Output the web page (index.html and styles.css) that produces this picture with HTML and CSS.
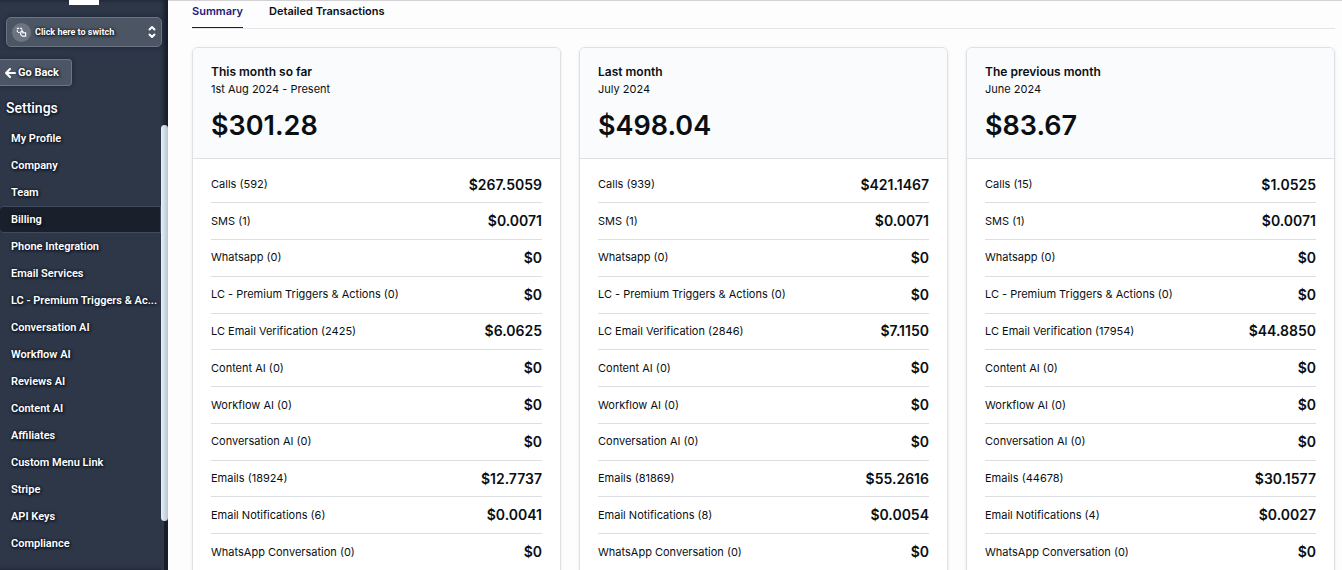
FILE: index.html
```html
<!DOCTYPE html>
<html lang="en">
<head>
<meta charset="utf-8">
<title>Billing</title>
<link rel="stylesheet" href="styles.css">
</head>
<body>
<aside class="sidebar">
  <div class="logo"></div>
  <button class="switcher" type="button">
    <span class="switcher-icon">
      <svg width="11" height="11" viewBox="0 0 12 12" fill="none" stroke="#fff" stroke-width="1.300"><rect x="1.500" y="1.500" width="5" height="4.500" stroke-dasharray="2 1"/><path d="M5.500 5h2v1.500h3v3.500h-3.500l-2-2z" fill="#5d6673"/></svg>
    </span>
    <span class="switcher-label">Click here to switch</span>
    <svg width="8" height="14" viewBox="0 0 8 14" fill="none" stroke="#fff" stroke-width="2" stroke-linecap="round" stroke-linejoin="round"><path d="M1.500 4.500L4 2l2.500 2.500M1.500 9.500L4 12l2.500-2.500"/></svg>
  </button>
  <button class="back" type="button">
    <svg width="11" height="10" viewBox="0 0 11 10" fill="none" stroke="#fff" stroke-width="2" stroke-linecap="round" stroke-linejoin="round"><path d="M5 1L1 5l4 4M1 5h9"/></svg>
    Go Back
  </button>
  <h2 class="settings-title">Settings</h2>
  <div class="menu-area">
    <nav class="menu">
      <a href="#">My Profile</a>
      <a href="#">Company</a>
      <a href="#">Team</a>
      <a href="#" class="active" aria-current="page">Billing</a>
      <a href="#">Phone Integration</a>
      <a href="#">Email Services</a>
      <a href="#">LC - Premium Triggers &amp; Ac...</a>
      <a href="#">Conversation AI</a>
      <a href="#">Workflow AI</a>
      <a href="#">Reviews AI</a>
      <a href="#">Content AI</a>
      <a href="#">Affiliates</a>
      <a href="#">Custom Menu Link</a>
      <a href="#">Stripe</a>
      <a href="#">API Keys</a>
      <a href="#">Compliance</a>
    </nav>
    <div class="track"><div class="thumb"></div></div>
  </div>
</aside>
<main class="content">
  <nav class="tabs">
    <a href="#" class="tab selected" aria-current="page">Summary</a>
    <a href="#" class="tab">Detailed Transactions</a>
  </nav>
  <div class="cards">
    <section class="card">
      <header class="card-head">
        <h3>This month so far</h3>
        <p class="period">1st Aug 2024 - Present</p>
        <p class="total">$301.28</p>
      </header>
      <div class="card-body">
        <table class="usage">
          <tr><th scope="row">Calls (592)</th><td>$267.5059</td></tr>
          <tr><th scope="row">SMS (1)</th><td>$0.0071</td></tr>
          <tr><th scope="row">Whatsapp (0)</th><td>$0</td></tr>
          <tr><th scope="row">LC - Premium Triggers &amp; Actions (0)</th><td>$0</td></tr>
          <tr><th scope="row">LC Email Verification (2425)</th><td>$6.0625</td></tr>
          <tr><th scope="row">Content AI (0)</th><td>$0</td></tr>
          <tr><th scope="row">Workflow AI (0)</th><td>$0</td></tr>
          <tr><th scope="row">Conversation AI (0)</th><td>$0</td></tr>
          <tr><th scope="row">Emails (18924)</th><td>$12.7737</td></tr>
          <tr><th scope="row">Email Notifications (6)</th><td>$0.0041</td></tr>
          <tr><th scope="row">WhatsApp Conversation (0)</th><td>$0</td></tr>
        </table>
      </div>
    </section>
    <section class="card">
      <header class="card-head">
        <h3>Last month</h3>
        <p class="period">July 2024</p>
        <p class="total">$498.04</p>
      </header>
      <div class="card-body">
        <table class="usage">
          <tr><th scope="row">Calls (939)</th><td>$421.1467</td></tr>
          <tr><th scope="row">SMS (1)</th><td>$0.0071</td></tr>
          <tr><th scope="row">Whatsapp (0)</th><td>$0</td></tr>
          <tr><th scope="row">LC - Premium Triggers &amp; Actions (0)</th><td>$0</td></tr>
          <tr><th scope="row">LC Email Verification (2846)</th><td>$7.1150</td></tr>
          <tr><th scope="row">Content AI (0)</th><td>$0</td></tr>
          <tr><th scope="row">Workflow AI (0)</th><td>$0</td></tr>
          <tr><th scope="row">Conversation AI (0)</th><td>$0</td></tr>
          <tr><th scope="row">Emails (81869)</th><td>$55.2616</td></tr>
          <tr><th scope="row">Email Notifications (8)</th><td>$0.0054</td></tr>
          <tr><th scope="row">WhatsApp Conversation (0)</th><td>$0</td></tr>
        </table>
      </div>
    </section>
    <section class="card">
      <header class="card-head">
        <h3>The previous month</h3>
        <p class="period">June 2024</p>
        <p class="total">$83.67</p>
      </header>
      <div class="card-body">
        <table class="usage">
          <tr><th scope="row">Calls (15)</th><td>$1.0525</td></tr>
          <tr><th scope="row">SMS (1)</th><td>$0.0071</td></tr>
          <tr><th scope="row">Whatsapp (0)</th><td>$0</td></tr>
          <tr><th scope="row">LC - Premium Triggers &amp; Actions (0)</th><td>$0</td></tr>
          <tr><th scope="row">LC Email Verification (17954)</th><td>$44.8850</td></tr>
          <tr><th scope="row">Content AI (0)</th><td>$0</td></tr>
          <tr><th scope="row">Workflow AI (0)</th><td>$0</td></tr>
          <tr><th scope="row">Conversation AI (0)</th><td>$0</td></tr>
          <tr><th scope="row">Emails (44678)</th><td>$30.1577</td></tr>
          <tr><th scope="row">Email Notifications (4)</th><td>$0.0027</td></tr>
          <tr><th scope="row">WhatsApp Conversation (0)</th><td>$0</td></tr>
        </table>
      </div>
    </section>
  </div>
</main>
</body>
</html>
```
FILE: styles.css
```css
* { box-sizing: border-box; }
body {
  margin: 0;
  display: flex;
  height: 100vh;
  overflow: hidden;
  font-family: Inter, "Liberation Sans", sans-serif;
  color: #0a0f14;
  background: #fdfdfd;
}
h2, h3, p { margin: 0; }
a { color: inherit; text-decoration: none; }

.sidebar {
  flex: 0 0 168px;
  display: flex;
  flex-direction: column;
  align-items: flex-start;
  overflow: hidden;
  background: #2d3748;
  box-shadow: inset -4px 0 4px #171d2b;
  color: #fff;
  font-family: Roboto, "Liberation Sans", sans-serif;
  text-shadow: 0 0 3px #0b101c, 1px 1px 3px #0b101c;
}
.logo {
  flex: none;
  width: 30px;
  height: 5px;
  margin: 0 auto 12px;
  background: #fff;
}
.switcher, .back {
  display: flex;
  align-items: center;
  border: 1px solid #6a7482;
  background: #4b5564;
  color: #fff;
  font-family: inherit;
  font-weight: 700;
  text-shadow: inherit;
  box-shadow: 0 0 5px #1c2432;
}
.switcher {
  align-self: stretch;
  gap: 4px;
  height: 30px;
  margin: 0 6px 12px;
  padding: 0 5px;
  border-radius: 5px;
  font-size: 9px;
}
.switcher-icon {
  display: grid;
  place-items: center;
  width: 19px;
  height: 19px;
  border-radius: 50%;
  background: #6b7480;
}
.switcher-label { flex: 1; text-align: left; }
.back {
  gap: 2px;
  height: 27px;
  padding: 0 12px 0 5px;
  border-left: 0;
  border-radius: 0 4px 4px 0;
  font-size: 11px;
}
.settings-title {
  padding: 12px 6px 7px;
  font-size: 14px;
  line-height: 20px;
  font-weight: 500;
}
.menu-area { flex: 1; align-self: stretch; display: flex; min-height: 0; }
.menu { flex: 1; min-width: 0; }
.menu a {
  display: block;
  height: 27px;
  padding: 0 2px 0 11px;
  border: 1px solid transparent;
  border-left: 0;
  border-radius: 4px 0 0 4px;
  font-size: 11px;
  line-height: 25px;
  font-weight: 600;
  white-space: nowrap;
}
.menu .active { background: #1a1f2c; border-color: #414b5b; }
.track { width: 7px; background: linear-gradient(90deg, #2d3748 3px, #171d2b 3px); }
.thumb {
  height: 89%;
  border-radius: 4px;
  background: linear-gradient(90deg, #e8f0f7, #b4c5d3);
}

.content {
  flex: 1;
  min-width: 0;
  padding: 0 7px 0 24px;
  border-top: 1px solid #d2d2d4;
}
.tabs {
  display: flex;
  gap: 26px;
  border-bottom: 1px solid #e4e5e8;
}
.tab {
  height: 27px;
  font-size: 11px;
  line-height: 20px;
  font-weight: 600;
}
.selected { color: #1c1a7a; border-bottom: 1px solid #1c1464; }
.cards {
  display: grid;
  grid-template-columns: repeat(3, 1fr);
  gap: 18px;
  padding-top: 18px;
}
.card {
  border: 1px solid #dfe1e5;
  border-radius: 6px;
  background: #fff;
  box-shadow: 0 1px 3px #0000001a;
  overflow: hidden;
}
.card-head {
  padding: 15px 18px 14px;
  border-bottom: 1px solid #dfe1e5;
  background: #f9fbfd;
}
.card-head h3 { font-size: 12px; line-height: 18px; font-weight: 600; }
.period { font-size: 11px; line-height: 17px; }
.total { margin-top: 10px; font-size: 27px; line-height: 36px; font-weight: 600; }
.card-body { padding: 8px 18px 18px; }
.usage { width: 100%; height: 404px; border-collapse: collapse; }
.usage th, .usage td { padding: 0 0 1px; border-bottom: 1px solid #dcdfe2; vertical-align: middle; }
.usage th { font-size: 11px; font-weight: 400; text-align: left; }
.usage td { font-size: 14px; font-weight: 600; text-align: right; }
```
